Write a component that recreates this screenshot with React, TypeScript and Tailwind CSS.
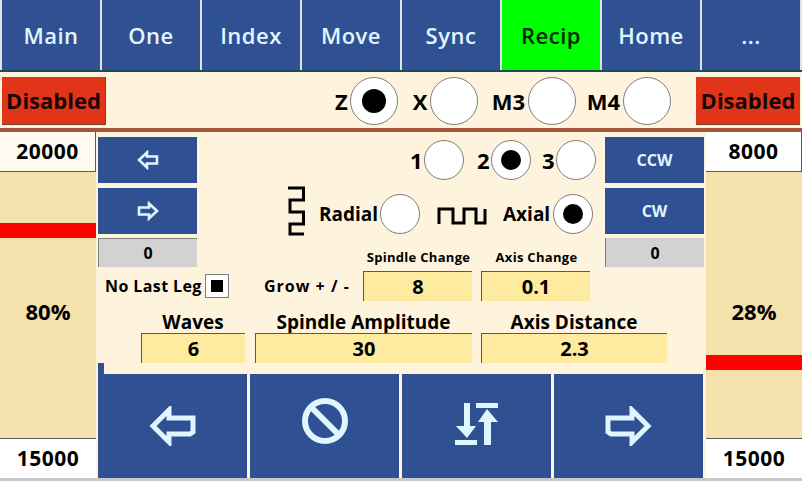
import type { ReactNode } from "react"

const tabs = ["Main", "One", "Index", "Move", "Sync", "Recip", "Home", "..."]

function Radio({ on, big }: { on?: boolean; big?: boolean }) {
  return (
    <span className={`flex shrink-0 items-center justify-center rounded-full border border-[#7f7f7f] bg-white ${big ? "h-12 w-12" : "h-10 w-10"}`}>
      {on && <span className={`rounded-full bg-black ${big ? "h-6 w-6" : "h-5 w-5"}`} />}
    </span>
  )
}

function Gauge({ top, topBg, bar, pct, bottom }: { top: string; topBg: string; bar: string; pct: string; bottom: string }) {
  return (
    <div className="relative flex h-[346px] w-[96px] shrink-0 flex-col justify-between bg-[#f5e1ab]">
      <div className={`flex h-10 items-center justify-center border-r border-b border-[#595959] text-[21px] tracking-[0.5px] text-black ${topBg}`}>{top}</div>
      <div className={`absolute left-0 h-[15px] w-full bg-[#ff0000] ${bar}`} />
      <div className="absolute top-[167px] left-0 w-full text-center text-[22px] leading-6 text-black">{pct}</div>
      <div className="flex h-10 items-center justify-center border-t border-[#595959] bg-white text-[21px] tracking-[0.5px] text-black">{bottom}</div>
    </div>
  )
}

function SideButton({ children }: { children: ReactNode }) {
  return <div className="flex h-[46px] w-[99px] items-center justify-center bg-[#2f5193] text-[16px] text-[#e0f6ff]">{children}</div>
}

function Field({ value, width }: { value: string; width: string }) {
  return (
    <div className={`flex h-[30px] items-center justify-center border-t border-l border-[#595959] bg-[#feeb9f] text-[20px] text-black ${width}`}>
      {value}
    </div>
  )
}

function SmallArrow({ left }: { left?: boolean }) {
  return (
    <svg width="22" height="20" viewBox="0 0 22 20" className={left ? "" : "-scale-x-100"}>
      <path d="M2 10 L10 2.5 V6.5 H20 V13.5 H10 V17.5 Z" fill="none" stroke="#e0f6ff" strokeWidth="2.6" />
    </svg>
  )
}

function BigArrow({ left }: { left?: boolean }) {
  return (
    <svg width="47" height="40" viewBox="0 0 47 40" className={left ? "" : "-scale-x-100"}>
      <path d="M4 20 L20 4 V12 H44 V26 L41 28 H20 V36 Z" fill="none" stroke="#e0f6ff" strokeWidth="5" />
    </svg>
  )
}

function BottomButton({ children }: { children: ReactNode }) {
  return <div className="flex h-[104px] w-[149px] items-center justify-center bg-[#2f5193]">{children}</div>
}

export default function App() {
  return (
    <div className="flex h-[481px] w-[802px] flex-col overflow-hidden bg-[#fef4dd] font-['Open_Sans',sans-serif] font-bold whitespace-nowrap text-black">
      {/* Tabs */}
      <div className="flex h-[72px] shrink-0 gap-[2px] border-b-2 border-[#1f4a5e] bg-[#dfe4ea] px-[2px]">
        {tabs.map((t) => (
          <div
            key={t}
            className={`flex w-[98px] items-center justify-center text-[22px] font-semibold tracking-[0.5px] ${t === "Recip" ? "bg-[#00ff00] text-[#04240a]" : "bg-[#2f5193] text-[#e0f6ff]"}`}
          >
            {t}
          </div>
        ))}
      </div>

      {/* Axis select */}
      <div className="flex h-[56px] shrink-0 items-center px-[2px] pt-[2px] text-[22px]">
        <div className="flex h-12 w-[104px] items-center justify-center border-r border-b border-[#7a3a28] bg-[#e1351a] text-[#1a0505]">Disabled</div>
        <div className="mr-[25px] ml-auto flex items-center">
          <span className="w-[15px] text-left">Z</span>
          <Radio big on />
          <span className="ml-[12px] w-[20px] text-center">X</span>
          <Radio big />
          <span className="ml-[11px] w-[39px] text-center">M3</span>
          <Radio big />
          <span className="ml-[8px] w-[39px] text-center">M4</span>
          <Radio big />
        </div>
        <div className="flex h-12 w-[104px] items-center justify-center border-b border-[#7a3a28] bg-[#e1351a] text-[#1a0505]">Disabled</div>
      </div>
      <div className="h-[4px] shrink-0 bg-[#a5563a]" />

      {/* Main */}
      <div className="flex">
        <Gauge top="20000" topBg="bg-[#fffaf0]" bar="top-[91px]" pct="80%" bottom="15000" />
        <div className="flex w-[610px] flex-col px-[2px] pt-[5px]">
          <div className="flex h-[130px] justify-between">
            <div className="flex flex-col">
              <SideButton><SmallArrow left /></SideButton>
              <div className="mt-[5px]"><SideButton><SmallArrow /></SideButton></div>
              <div className="mt-1 flex h-[29px] items-center justify-center border-t border-l border-[#7f7f7f] bg-[#d2d2d2] text-[16px]">0</div>
            </div>
            <div className="flex flex-1 flex-col">
              <div className="mt-[3px] flex h-10 items-center justify-end pr-[9px] text-[22px]">
                <span className="w-[14px]">1</span><Radio />
                <span className="ml-[13px] w-[14px]">2</span><Radio on />
                <span className="ml-[11px] w-[14px]">3</span><Radio />
              </div>
              <div className="mt-[14px] flex h-10 items-center pl-[91px] text-[19px]">
                <svg width="18" height="50" viewBox="0 0 18 50" className="mb-[6px]">
                  <path d="M0 2 H15.5 V14 H2 V26 H15.5 V38 H2 V48 H16" fill="none" stroke="#000" strokeWidth="3" />
                </svg>
                <span className="ml-[13px] w-[60px]">Radial</span>
                <span className="ml-[1px]"><Radio /></span>
                <svg width="50" height="18" viewBox="0 0 50 18" className="mt-[4px] ml-[17px]">
                  <path d="M2 17 V2 H16 V16 H27 V2 H39 V16 H48 V2" fill="none" stroke="#000" strokeWidth="3" />
                </svg>
                <span className="ml-[16px] w-[49px]">Axial</span>
                <span className="ml-[1px]"><Radio on /></span>
              </div>
              <div className="mt-[15px] flex text-[13px] leading-4 tracking-[0.3px]">
                <span className="ml-[167px] w-[109px] text-center">Spindle Change</span>
                <span className="ml-[9px] w-[109px] text-center">Axis Change</span>
              </div>
            </div>
            <div className="flex flex-col">
              <SideButton>CCW</SideButton>
              <div className="mt-[5px]"><SideButton>CW</SideButton></div>
              <div className="mt-1 flex h-[29px] items-center justify-center border-l border-[#7f7f7f] bg-[#d2d2d2] text-[16px]">0</div>
            </div>
          </div>

          <div className="mt-1 flex h-[30px] items-center">
            <span className="ml-[7px] w-[100px] text-[16px] tracking-[0.4px]">No Last Leg</span>
            <span className="flex h-6 w-6 items-center justify-center border border-[#7f7f7f] bg-white">
              <span className="h-3 w-3 bg-black" />
            </span>
            <span className="ml-[35px] w-[99px] text-[16px] tracking-[1px]">Grow + / -</span>
            <Field value="8" width="w-[109px]" />
            <div className="ml-[9px]"><Field value="0.1" width="w-[109px]" /></div>
          </div>

          <div className="mt-[10px] flex h-[22px] items-center text-[19px]">
            <span className="ml-[43px] w-[104px] text-center">Waves</span>
            <span className="ml-[10px] w-[217px] text-center">Spindle Amplitude</span>
            <span className="ml-[9px] w-[186px] text-center">Axis Distance</span>
          </div>
          <div className="flex">
            <div className="ml-[43px]"><Field value="6" width="w-[104px]" /></div>
            <div className="ml-[10px]"><Field value="30" width="w-[217px]" /></div>
            <div className="ml-[9px]"><Field value="2.3" width="w-[186px]" /></div>
          </div>
          <div className="h-[11px] w-[6px] bg-[#2f5193]" />

          <div className="flex gap-[3px]">
            <BottomButton><BigArrow left /></BottomButton>
            <BottomButton>
              <svg width="48" height="48" viewBox="0 0 48 48" className="mb-[10px]">
                <circle cx="24" cy="24" r="20" fill="none" stroke="#e0f6ff" strokeWidth="6" />
                <path d="M10 10 L38 38" stroke="#e0f6ff" strokeWidth="6" />
              </svg>
            </BottomButton>
            <BottomButton>
              <svg width="44" height="44" viewBox="0 0 44 44" className="mb-[2px]">
                <path d="M9 0 H15 V23 H21 L12 35 L1 23 H9 Z M0 37 H22 V42 H0 Z M21 0 H43 V5 H21 Z M32 6 L43 19 H36 V42 H29 V19 H23 Z" fill="#e0f6ff" />
              </svg>
            </BottomButton>
            <BottomButton><BigArrow /></BottomButton>
          </div>
        </div>
        <Gauge top="8000" topBg="bg-white" bar="top-[223px]" pct="28%" bottom="15000" />
      </div>
      <div className="flex-1 bg-[#c8c8c8]" />
    </div>
  )
}
